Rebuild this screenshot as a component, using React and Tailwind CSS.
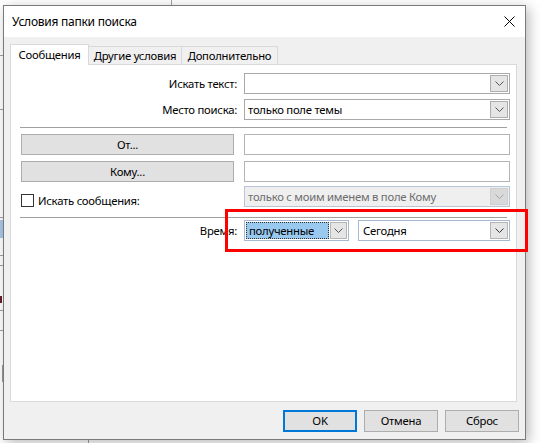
import React from "react";

function Chevron({ color = "#555555" }) {
  return (
    <svg width="9" height="5" viewBox="0 0 9 5" className="block">
      <polyline points="0.5,0.5 4.5,4.5 8.5,0.5" fill="none" stroke={color} strokeWidth="1" />
    </svg>
  );
}

function GreyCombo({ text }) {
  return (
    <div className="flex h-[21px] w-[266px] border border-[#a9a9a9] bg-white">
      <div className="flex flex-1 items-center pl-[3px] text-black">{text}</div>
      <div className="my-[1px] mr-[1px] flex w-[18px] items-center justify-center border border-[#adadad] bg-[#e5e5e5]">
        <Chevron />
      </div>
    </div>
  );
}

function TextBox() {
  return <div className="h-[21px] w-[266px] border border-[#b4b4b4] bg-white" />;
}

function Button({ children }) {
  return (
    <div className="flex h-[21px] w-[213px] items-center justify-center border border-[#adadad] bg-[#e1e1e1] text-black">
      {children}
    </div>
  );
}

function Separator() {
  return <div className="ml-[-1px] h-px w-[487px] bg-[#a0a0a0]" />;
}

export default function App() {
  return (
    <div className="relative h-[443px] w-[541px] overflow-hidden bg-white font-['Noto_Sans',sans-serif] text-[11.3px] tracking-[-0.25px] leading-none text-black">
      {/* background window slivers */}
      <div className="absolute left-[171px] top-0 h-[5px] w-px bg-[#a0a0a0]" />
      <div className="absolute left-[88px] top-[439px] h-[4px] w-px bg-[#a0a0a0]" />
      <div className="absolute left-0 top-[55px] h-px w-[3px] bg-[#a0a0a0]" />
      <div className="absolute left-0 top-[109px] h-px w-[3px] bg-[#a0a0a0]" />
      <div className="absolute left-0 top-[217px] h-px w-[3px] bg-[#a0a0a0]" />
      <div className="absolute left-0 top-[220px] h-[18px] w-[3px] bg-[#a9c9e8]" />
      <div className="absolute left-0 top-[255px] h-px w-[3px] bg-[#a0a0a0]" />
      <div className="absolute left-0 top-[265px] h-px w-[3px] bg-[#a0a0a0]" />
      <div className="absolute left-0 top-[296px] h-[7px] w-[2px] bg-[#6b1f2f]" />
      <div className="absolute left-0 top-[310px] h-px w-[3px] bg-[#a0a0a0]" />
      <div className="absolute left-0 top-[330px] h-px w-[3px] bg-[#a0a0a0]" />
      <div className="absolute left-[2px] top-[365px] h-[17px] w-px bg-[#9a9a9a]" />

      {/* dialog window */}
      <div className="absolute left-[3px] top-[5px] flex h-[435px] w-[523px] flex-col border border-[#7a7a7a] bg-[#f0f0f0] shadow-[3px_3px_12px_rgba(0,0,0,0.28)]">
        {/* title bar */}
        <div className="flex h-[31px] items-center justify-between bg-white pl-[8px] pr-[10px]">
          <span className="text-[12px]">Условия папки поиска</span>
          <svg width="11" height="11" viewBox="0 0 11 11" className="block">
            <line x1="0.5" y1="0.5" x2="10.5" y2="10.5" stroke="#000" strokeWidth="1" />
            <line x1="10.5" y1="0.5" x2="0.5" y2="10.5" stroke="#000" strokeWidth="1" />
          </svg>
        </div>

        {/* body */}
        <div className="flex flex-1 flex-col pl-[6px] pt-[7px]">
          {/* tabs */}
          <div className="relative z-10 flex h-[20px] items-end">
            <div className="mb-[-1px] flex h-[21px] w-[79px] items-center justify-center border border-b-0 border-[#d9d9d9] bg-white">
              Сообщения
            </div>
            <div className="flex h-[18px] w-[93px] items-center justify-center border-r border-t border-[#d9d9d9] bg-[#f0f0f0]">
              Другие условия
            </div>
            <div className="flex h-[18px] w-[96px] items-center justify-center border-r border-t border-[#d9d9d9] bg-[#f0f0f0]">
              Дополнительно
            </div>
          </div>

          {/* panel */}
          <div className="flex h-[338px] w-[507px] flex-col border border-[#d9d9d9] bg-white pl-[10px] pt-[8px]">
            <div className="flex gap-[10px]">
              <div className="mr-[-3px] flex w-[216px] items-center justify-end">Искать текст:</div>
              <GreyCombo text="" />
            </div>
            <div className="mt-[5px] flex gap-[10px]">
              <div className="mr-[-3px] flex w-[216px] items-center justify-end">Место поиска:</div>
              <GreyCombo text="только поле темы" />
            </div>
            <div className="mt-[7px]">
              <Separator />
            </div>
            <div className="mt-[6px] flex items-start gap-[10px]">
              <Button>От...</Button>
              <TextBox />
            </div>
            <div className="mt-[6px] flex items-start gap-[10px]">
              <Button>Кому...</Button>
              <TextBox />
            </div>
            <div className="mt-[4px] flex gap-[10px]">
              <div className="flex w-[213px] items-start">
                <div className="mt-[8px] flex items-center gap-[4px]">
                  <div className="h-[13px] w-[13px] border border-[#333333] bg-white" />
                  <span>Искать сообщения:</span>
                </div>
              </div>
              <div className="flex h-[21px] w-[266px] border border-[#b8c5d8] bg-[#efefef]">
                <div className="flex flex-1 items-center pl-[3px] text-[#6d6d6d]">только с моим именем в поле Кому</div>
                <div className="my-[1px] mr-[1px] flex w-[18px] items-center justify-center border border-[#cfcfcf] bg-[#d9d9d9]">
                  <Chevron color="#a3a3a3" />
                </div>
              </div>
            </div>
            <div className="mt-[10px]">
              <Separator />
            </div>
            <div className="mt-[2px] flex gap-[10px]">
              <div className="mr-[-3px] flex w-[216px] items-center justify-end">Время:</div>
              <div className="flex gap-[9px]">
                <div className="flex h-[21px] w-[105px] border border-[#a6b9d3] bg-white p-[1px]">
                  <div className="flex w-[83px] items-center border border-dotted border-[#333333] bg-[#99c9ef] pl-[2px]">
                    полученные
                  </div>
                  <div className="ml-[1px] flex w-[17px] items-center justify-center border border-[#b5b5b5] bg-[#e5e5e5]">
                    <Chevron />
                  </div>
                </div>
                <div className="flex h-[21px] w-[152px] border border-[#a6b9d3] bg-white p-[1px]">
                  <div className="flex flex-1 items-center pl-[3px]">Сегодня</div>
                  <div className="flex w-[18px] items-center justify-center border border-[#b5b5b5] bg-[#e5e5e5]">
                    <Chevron color="#333333" />
                  </div>
                </div>
              </div>
            </div>
          </div>

          {/* bottom buttons */}
          <div className="mt-[8px] flex justify-end gap-[7px] pr-[6px]">
            <div className="flex h-[22px] w-[74px] items-center justify-center border-2 border-[#0078d7] bg-[#e1e1e1]">OK</div>
            <div className="flex h-[22px] w-[74px] items-center justify-center border border-[#adadad] bg-[#e1e1e1]">Отмена</div>
            <div className="flex h-[22px] w-[74px] items-center justify-center border border-[#adadad] bg-[#e1e1e1]">Сброс</div>
          </div>
        </div>
      </div>

      {/* red highlight annotation */}
      <div className="absolute left-[225px] top-[209px] h-[43px] w-[303px] border-[3px] border-[#ff0000]" />
    </div>
  );
}
